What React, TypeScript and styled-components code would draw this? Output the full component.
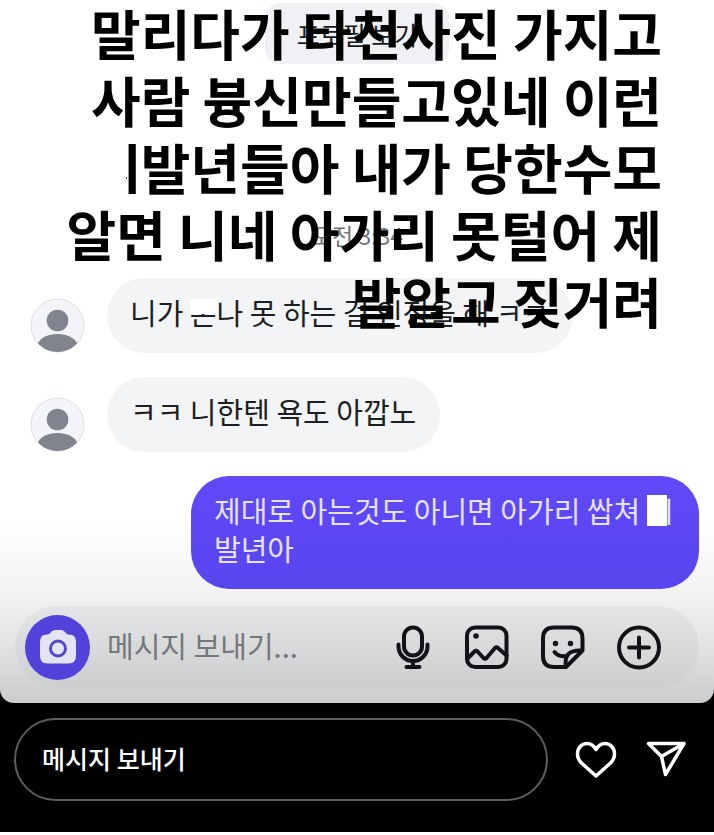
import React from "react";
import styled, { createGlobalStyle } from "styled-components";

const GlobalStyle = createGlobalStyle`
  * { box-sizing: border-box; }
  body { margin: 0; background: #fff; font-family: "Noto Sans CJK KR", "Noto Sans", sans-serif; }
  button, input { font: inherit; color: inherit; border: 0; padding: 0; background: none; outline: none; }
  button { cursor: pointer; display: flex; align-items: center; justify-content: center; }
`;

const Viewer = styled.main`
  background: #000;
`;

const Story = styled.section`
  position: relative;
  display: flex;
  flex-direction: column;
  padding: 3px 0 15px;
  border-radius: 0 0 14px 14px;
  overflow: hidden;
  background: linear-gradient(to bottom, #fff 0, #fff 520px, #f3f3f4 590px, #e2e3e4 645px, #cbccce 100%);
`;

const ProfileButton = styled.button`
  align-self: center;
  height: 61px;
  padding: 0 32px;
  border-radius: 16px;
  background: #eff1f4;
  color: #16181c;
  font-size: 25px;
`;

const Time = styled.time`
  align-self: center;
  margin-top: 151px;
  height: 40px;
  line-height: 40px;
  font-size: 23px;
  color: #71757b;
`;

const Thread = styled.div`
  display: flex;
  flex-direction: column;
  gap: 24px;
  margin-top: 23px;
  padding: 0 15px 0 30px;
`;

const Row = styled.div<{ $own?: boolean }>`
  display: flex;
  align-items: flex-end;
  justify-content: ${(p) => (p.$own ? "flex-end" : "flex-start")};
  gap: 22px;
`;

const Bubble = styled.p<{ $own?: boolean }>`
  margin: 0;
  padding: 15px 24px 22px 23px;
  max-width: 508px;
  border-radius: 38px;
  font-size: 29px;
  line-height: 38px;
  word-break: break-all;
  color: ${(p) => (p.$own ? "#e6e2ff" : "#1c1e22")};
  background: ${(p) => (p.$own ? "linear-gradient(#6148f8, #5746ee)" : "#f2f4f6")};
`;

const Masked = styled.span<{ $left: number; $top: number; $w: number; $h: number }>`
  position: relative;
  &::after {
    content: "";
    position: absolute;
    left: ${(p) => p.$left}px;
    top: ${(p) => p.$top}px;
    width: ${(p) => p.$w}px;
    height: ${(p) => p.$h}px;
    background: #fff;
  }
`;

const Composer = styled.form`
  display: flex;
  align-items: center;
  margin: 17px 15px 0;
  height: 82px;
  padding: 0 36px 0 10px;
  border-radius: 41px;
  background: linear-gradient(#e4e5e6, #cdced0);
`;

const CameraButton = styled.button`
  flex: none;
  width: 65px;
  height: 65px;
  border-radius: 50%;
  background: #5142dc;
`;

const DraftInput = styled.input`
  && {
    flex: 1;
    min-width: 0;
    margin: 0 16px 0 17px;
    padding-bottom: 4px;
    font-size: 29px;
  }
  &::placeholder { color: #74777b; opacity: 1; }
`;

const Tools = styled.div`
  display: flex;
  gap: 28px;
  color: #111316;
`;

const Caption = styled.p`
  position: absolute;
  top: -1px;
  right: 52px;
  width: 610px;
  margin: 0;
  text-align: right;
  font-size: 54px;
  line-height: 67px;
  font-weight: 700;
  color: #000;
`;

const ReplyBar = styled.form`
  display: flex;
  align-items: center;
  padding: 15px 26px 31px 14px;
`;

const ReplyInput = styled.input`
  && {
    flex: 1;
    min-width: 0;
    height: 83px;
    padding: 0 26px 3px;
    border: 2px solid #5d5d5d;
    border-radius: 42px;
    font-size: 25px;
    font-weight: 500;
    color: #fff;
  }
  &::placeholder { color: #fff; opacity: 1; }
`;

const ReplyActions = styled.div`
  display: flex;
  gap: 26px;
  margin-left: 26px;
  color: #fff;
`;

const Avatar = () => (
  <svg width="55" height="55" viewBox="0 0 55 55" role="img" aria-label="프로필">
    <defs>
      <clipPath id="face"><circle cx="27.5" cy="27.5" r="26.5" /></clipPath>
    </defs>
    <circle cx="27.5" cy="27.5" r="26.5" fill="#f3f5f9" stroke="#dcdee2" />
    <g clipPath="url(#face)" fill="#81848f">
      <circle cx="27.5" cy="22.5" r="10.8" />
      <ellipse cx="27.5" cy="50" rx="21" ry="14" />
    </g>
  </svg>
);

const stroke = { fill: "none", stroke: "currentColor", strokeLinecap: "round", strokeLinejoin: "round" } as const;

const CameraIcon = () => (
  <svg width="38" height="38" viewBox="0 0 38 38">
    <path fill="#e4e3f4" d="M12.5 3.500Q14 2 16 2h6q2 0 3.500 1.500L27 5.200Q28 6.500 30 6.500Q37 6.500 37 13.500V28Q37 35.500 29.500 35.500H8.500Q1 35.500 1 28V13.500Q1 6.500 8 6.500Q10 6.500 11 5.200Z" />
    <circle cx="19" cy="20.500" r="7.500" fill="#e4e3f4" stroke="#5649c8" strokeWidth="3" />
  </svg>
);

const MicIcon = () => (
  <svg width="48" height="48" viewBox="0 0 48 48" strokeWidth="4" {...stroke}>
    <rect x="17" y="4.500" width="18" height="28" rx="9" />
    <path d="M11.500 21.500v2a14.500 14.500 0 0 0 29 0v-2M26 38v6M19.500 44h13" />
  </svg>
);

const PhotoIcon = () => (
  <svg width="48" height="48" viewBox="0 0 48 48" strokeWidth="4" {...stroke}>
    <rect x="4" y="4.500" width="39.500" height="39.500" rx="8" />
    <circle cx="13" cy="13" r="2.800" fill="currentColor" stroke="none" />
    <path d="M4.500 35.500L11.500 28.500q1.500-1.500 3 0l6 6.500q1.500 1.500 3 0L32 25q1.500-1.500 3 0l8.500 7.500" />
  </svg>
);

const StickerIcon = () => (
  <svg width="48" height="48" viewBox="0 0 48 48" strokeWidth="4" {...stroke}>
    <path d="M27 44H15Q4 44 4 33V15.500Q4 4.500 15 4.500H32.500Q43.500 4.500 43.500 15.500V27.500L27 44Q25.500 36 29 31.500Q32.500 27 43.500 27.500" />
    <path d="M15.500 29q4 5 10.500 4" />
    <circle cx="16.500" cy="20.500" r="2.700" fill="currentColor" stroke="none" />
    <circle cx="31.500" cy="20.500" r="2.700" fill="currentColor" stroke="none" />
  </svg>
);

const PlusIcon = () => (
  <svg width="48" height="48" viewBox="0 0 48 48" strokeWidth="4" {...stroke}>
    <circle cx="24" cy="24.500" r="20" />
    <path d="M24 14.500v20M14 24.500h20" />
  </svg>
);

const HeartIcon = () => (
  <svg width="44" height="44" viewBox="0 0 44 44" strokeWidth="3.500" {...stroke}>
    <path d="M22 38L7.500 25Q3.500 21 3.500 16C3.500 10 7.500 5.500 13 5.500Q18.500 5.500 22 11.500Q25.500 5.500 31 5.500C36.500 5.500 40.500 10 40.500 16Q40.500 21 36.500 25Z" />
  </svg>
);

const SendIcon = () => (
  <svg width="44" height="44" viewBox="0 0 44 44" strokeWidth="3.500" {...stroke}>
    <path d="M4.500 5.500H40L21.500 36.500L17.500 18.500ZM17.500 18.500L40 5.500" />
  </svg>
);

export default function App() {
  return (
    <>
      <GlobalStyle />
      <Viewer>
        <Story>
          <ProfileButton type="button">프로필 보기</ProfileButton>
          <Time>오전 3:34</Time>
          <Thread>
            <Row>
              <Avatar />
              <Bubble>
                니가 <Masked $left={0} $top={8} $w={27} $h={15}>존</Masked>나 못 하는 걸 인정을 해 ㅋㅋ
              </Bubble>
            </Row>
            <Row>
              <Avatar />
              <Bubble>ㅋㅋ 니한텐 욕도 아깝노</Bubble>
            </Row>
            <Row $own>
              <Bubble $own>
                제대로 아는것도 아니면 아가리 쌉쳐 <Masked $left={0} $top={6} $w={20} $h={31}>씨</Masked>발년아
              </Bubble>
            </Row>
          </Thread>
          <Composer>
            <CameraButton type="button" aria-label="카메라"><CameraIcon /></CameraButton>
            <DraftInput aria-label="메시지" placeholder="메시지 보내기..." />
            <Tools>
              <button type="button" aria-label="음성"><MicIcon /></button>
              <button type="button" aria-label="사진"><PhotoIcon /></button>
              <button type="button" aria-label="스티커"><StickerIcon /></button>
              <button type="button" aria-label="더 보기"><PlusIcon /></button>
            </Tools>
          </Composer>
          <Caption>
            말리다가 타천사진 가지고<br />
            사람 븅신만들고있네 이런<br />
            <Masked $left={-2} $top={8} $w={37} $h={66}>씨</Masked>발년들아 내가 당한수모<br />
            알면 니네 아가리 못털어 제<br />
            발알고 짖거려
          </Caption>
        </Story>
        <ReplyBar>
          <ReplyInput aria-label="답장" placeholder="메시지 보내기" />
          <ReplyActions>
            <button type="button" aria-label="좋아요"><HeartIcon /></button>
            <button type="button" aria-label="공유"><SendIcon /></button>
          </ReplyActions>
        </ReplyBar>
      </Viewer>
    </>
  );
}
